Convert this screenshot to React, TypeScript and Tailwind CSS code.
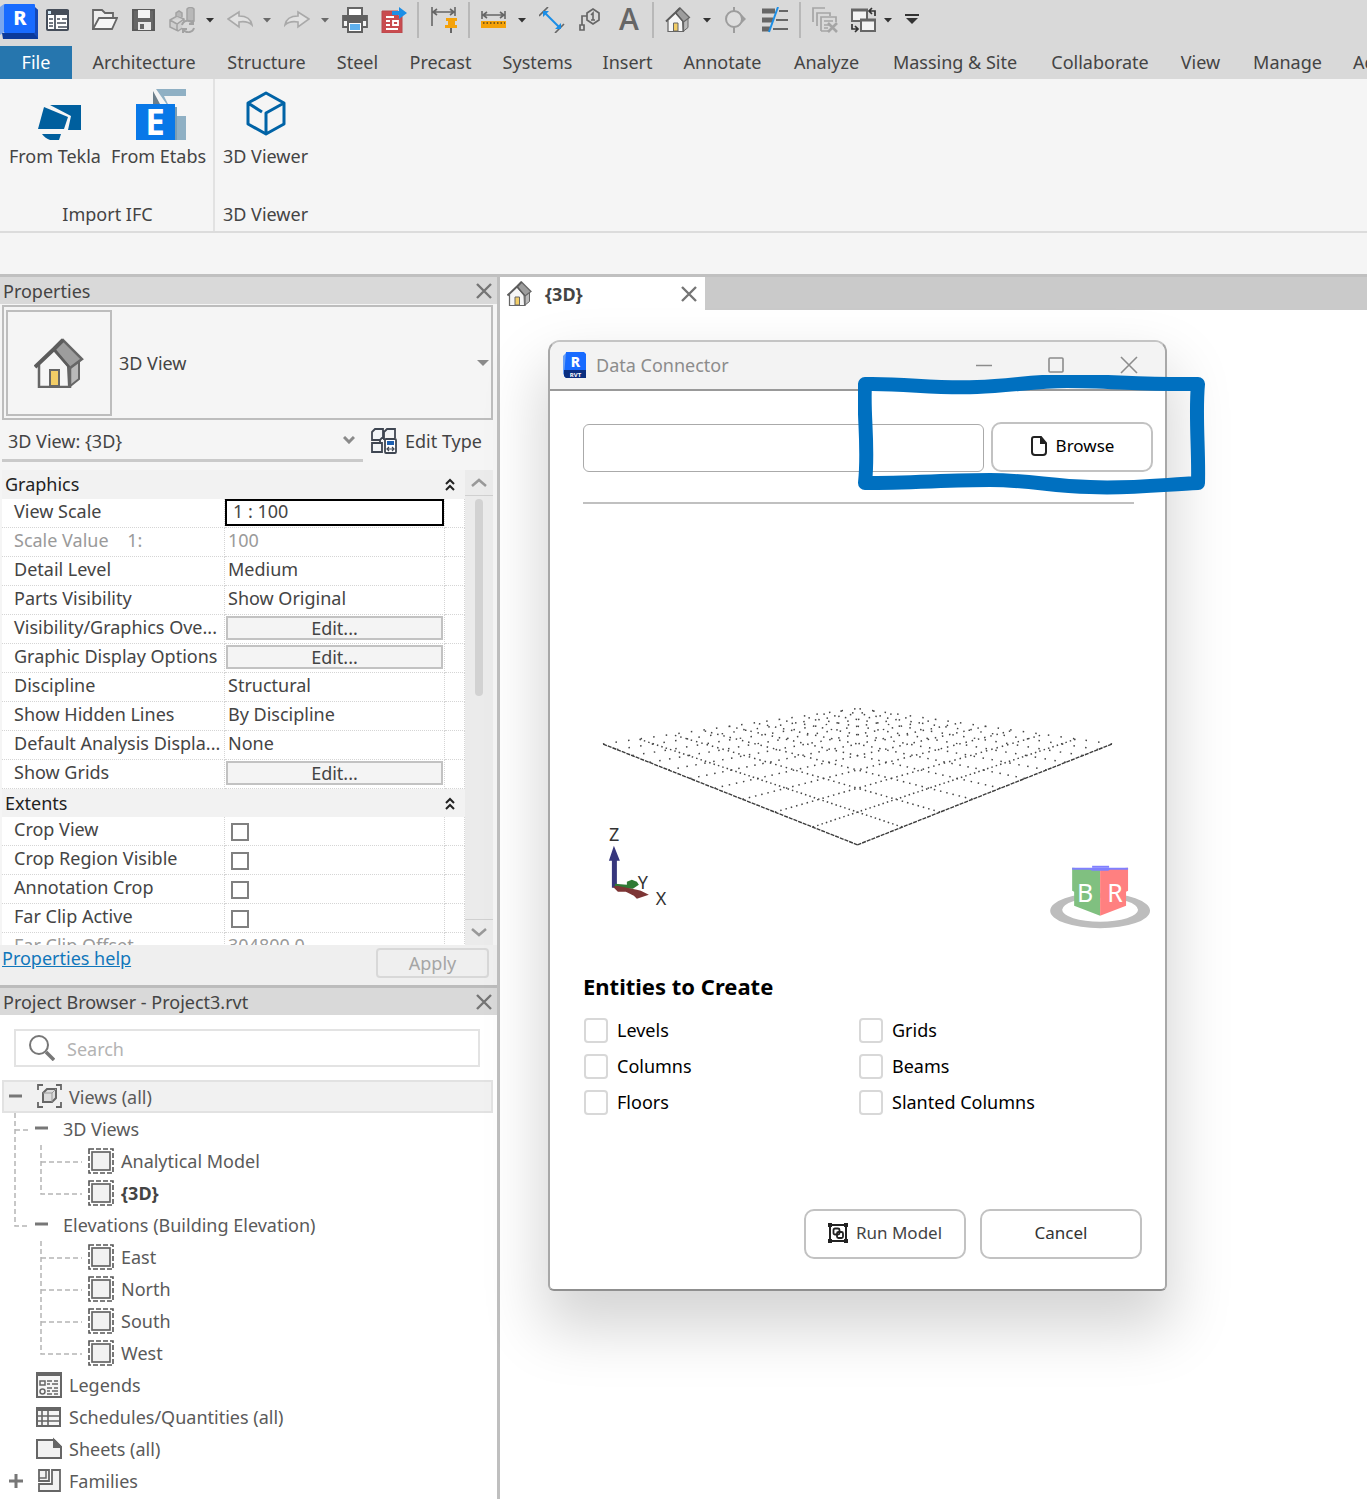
import React from "react";

type IconProps = { className?: string; children?: React.ReactNode; box?: string };

const Icon = ({ className = "h-[26px] w-[26px]", children, box = "0 0 26 26" }: IconProps) => (
  <svg viewBox={box} className={`shrink-0 ${className}`} fill="none" stroke="#666" strokeWidth="2" aria-hidden="true">
    {children}
  </svg>
);

const House = ({ className }: { className?: string }) => (
  <Icon className={className} box="0 0 50 50">
    <path d="M5 26 20 11 34 28v20H5z" fill="#f6f6f6" stroke="none" />
    <path d="M34 29 45 20v21l-10 8z" fill="#b9b9b9" stroke="#666" />
    <path d="M20 12 29 2l19 19-12 9z" fill="#9d9d9d" stroke="#666" strokeWidth="2.5" />
    <path d="M5 27v22h31V29" stroke="#666" strokeWidth="2.5" />
    <path d="M1 29 20 11 29 2" stroke="#5c5c5c" strokeWidth="4" />
    <path d="M20 11l15 18" stroke="#5c5c5c" strokeWidth="2.5" />
    <path d="M16 48V32h9v16z" fill="#f2cd66" stroke="#666" />
  </Icon>
);

const Close = ({ className = "h-4 w-4" }: { className?: string }) => (
  <Icon className={className} box="0 0 16 16">
    <path d="M1 1l14 14M15 1L1 15" stroke="#757575" strokeWidth="2.4" />
  </Icon>
);

const Caret = ({ color = "#333" }: { color?: string }) => (
  <Icon className="h-[6px] w-[10px]" box="0 0 10 6">
    <path d="M1 1h8L5 5.500z" fill={color} stroke="none" />
  </Icon>
);

const RevitLogo = () => (
  <Icon className="h-[36px] w-[38px]" box="0 0 38 36">
    <path d="M0 4 4 1v28l-4 3z" fill="#79a6ee" stroke="none" />
    <path d="M2 30h32V4l4 3v29H3z" fill="#0b3a9b" stroke="none" />
    <path d="M34 3l4 4v28l-4-4z" fill="#1548b5" stroke="none" />
    <rect x="4" y="1" width="31" height="29" rx="1" fill="#186bff" stroke="none" />
    <text x="20" y="22" textAnchor="middle" fontFamily="Noto Sans" fontWeight="800" fontSize="20" fill="#fff" stroke="none">R</text>
  </Icon>
);

const tools: { label: string; gap: string; kind?: "caret" | "sep"; color?: string; icon?: React.ReactNode }[] = [
  {
    label: "Home", gap: "ml-[7px]",
    icon: (
      <Icon>
        <rect x="2" y="3" width="21" height="20" rx="1" fill="#fff" stroke="#454d59" />
        <path d="M1 3h23v5H1z" fill="#454d59" stroke="none" />
        <path d="M3 4h3v3H3z" fill="#cfe6f5" stroke="none" />
        <path d="M10 8v15M4 12h4M4 16h4M4 19h4M12 12h3M17 12h5M12 16h9M13 20h9" stroke="#454d59" strokeWidth="1.700" />
      </Icon>
    ),
  },
  {
    label: "Open", gap: "ml-[21px]",
    icon: (
      <Icon>
        <path d="M1 22V3h9l3 3h8v5" fill="#eee" strokeWidth="1.800" />
        <path d="M1 22 7 11h18l-5 11z" fill="#f6f6f6" strokeWidth="1.800" />
      </Icon>
    ),
  },
  {
    label: "Save", gap: "ml-[13px]",
    icon: (
      <Icon>
        <path d="M2 3h21v20H2z" fill="#666" stroke="#5a5a5a" />
        <path d="M7 3h12v8H7z" fill="#f4f4f4" stroke="none" />
        <path d="M7 15h13v8H7z" fill="#e8e8e8" stroke="none" />
        <path d="M9 17h4v5H9z" fill="#666" stroke="none" />
      </Icon>
    ),
  },
  {
    label: "Synchronize", gap: "ml-[12px]",
    icon: (
      <Icon>
        <g stroke="#a2a2a2" strokeWidth="1.5">
          <path d="M1 13l7-4 7 3v8l-6 4-8-4zM1 13l7 4 7-5M8 17v6" fill="#cfcfcf" />
          <path d="M18 2c2-2 5-2 7 0v12h-7zM7 9V6l3-2 3 2v4" fill="#b8b8b8" />
          <circle cx="19" cy="20" r="6" fill="#d9d9d9" stroke="none" />
          <path d="M13 18a6 6 0 0 1 11-1M25 21a6 6 0 0 1-11 1M24 13v4h-4M14 26v-4h4" strokeWidth="2" />
        </g>
      </Icon>
    ),
  },
  { label: "Synchronize options", gap: "ml-2.5", kind: "caret" },
  {
    label: "Undo", gap: "ml-3",
    icon: <Icon><path d="M1 12 12 5v4c7 0 12 3 13 9-3-3-7-4-13-3v5z" stroke="#a9a9a9" fill="#e2e2e2" strokeWidth="1.6" /></Icon>,
  },
  { label: "Undo list", gap: "ml-[9px]", kind: "caret", color: "#6a6a6a" },
  {
    label: "Redo", gap: "ml-3",
    icon: <Icon><path d="M25 12 14 5v4C7 9 2 12 1 18c3-3 7-4 13-3v5z" stroke="#a9a9a9" fill="#e2e2e2" strokeWidth="1.6" /></Icon>,
  },
  { label: "Redo list", gap: "ml-2.5", kind: "caret", color: "#6a6a6a" },
  {
    label: "Print", gap: "ml-3",
    icon: (
      <Icon>
        <path d="M6 9V1h14v8" fill="#fff" />
        <path d="M1 9h24v11H1z" fill="#f4f4f4" stroke="#606060" strokeWidth="1.800" />
        <path d="M1 9h24v5H1z" fill="#606060" stroke="none" />
        <path d="M6 15h14v10H6z" fill="#fff" stroke="#606060" />
        <path d="M8 17h10v6H8z" fill="#5fb1ee" stroke="none" />
      </Icon>
    ),
  },
  {
    label: "Export PDF", gap: "ml-[13px]",
    icon: (
      <Icon>
        <path d="M1 4h16v5h4v17H1z" fill="#c94b4f" stroke="#b8484c" strokeWidth="1" />
        <path d="M5 10h8M5 14h4M5 18h4M5 22h12M12 14h5v4h-5z" stroke="#fff" strokeWidth="1.800" />
        <path d="M11 4h7V0l8 6-8 6V8h-7z" fill="#1b8ee6" stroke="none" />
      </Icon>
    ),
  },
  { label: "s1", gap: "ml-2.5", kind: "sep" },
  {
    label: "Align", gap: "ml-[12px]",
    icon: (
      <Icon>
        <path d="M1 0v19M24 0v9M2 5h21M6 2 2 5l4 3M19 2l4 3-4 3" strokeWidth="1.6" />
        <path d="M15 11h11v3h-2v4h3v3H14v-3h3v-4h-2z" fill="#f5a209" stroke="none" />
        <path d="M20 21v5" />
      </Icon>
    ),
  },
  { label: "s2", gap: "ml-[11px]", kind: "sep" },
  {
    label: "Measure", gap: "ml-[11px]",
    icon: (
      <Icon>
        <path d="M1 4v8M24 4v8M2 8h21M6 5 2 8l4 3M19 5l4 3-4 3" strokeWidth="1.6" />
        <path d="M0 14h25v7H0z" fill="#f5a209" stroke="none" />
        <path d="M2 16h22" stroke="#7c5a14" strokeDasharray="1.5 2" />
      </Icon>
    ),
  },
  { label: "Measure options", gap: "ml-2.5", kind: "caret" },
  {
    label: "Aligned dimension", gap: "ml-3",
    icon: (
      <Icon>
        <path d="M0 9 9 0M16 26l9-9" strokeWidth="1.600" />
        <path d="M5 5l16 16" stroke="#1b8ee6" />
        <path d="M4 4h6l-6 6zM22 22h-6l6-6z" fill="#1b8ee6" stroke="none" />
      </Icon>
    ),
  },
  {
    label: "Tag by category", gap: "ml-3",
    icon: (
      <Icon>
        <path d="M10 6l6-4 6 4v7l-6 4-6-4zM10 9H5v9" strokeWidth="1.7" />
        <path d="M3 18h4v5H3z" strokeWidth="1.7" />
        <path d="M14 8l2-2v7M14 13h4" strokeWidth="1.6" />
      </Icon>
    ),
  },
  {
    label: "Text", gap: "ml-[13px]",
    icon: <Icon className="h-[26px] w-[26px] overflow-visible"><text x="13" y="23" textAnchor="middle" fontFamily="Open Sans" fontWeight="600" fontSize="30" fill="#666" stroke="none">A</text></Icon>,
  },
  { label: "s3", gap: "ml-2.5", kind: "sep" },
  { label: "Default 3D view", gap: "ml-[11px]", icon: <House className="h-[25px] w-[26px]" /> },
  { label: "3D view options", gap: "ml-[11px]", kind: "caret" },
  {
    label: "Section", gap: "ml-2.5",
    icon: (
      <Icon>
        <path d="M16 4l8 8-8 8z" fill="#9d9d9d" stroke="none" />
        <circle cx="12" cy="12" r="8" fill="#dedede" stroke="#9d9d9d" />
        <path d="M12 0v4M12 20v6" stroke="#9d9d9d" />
      </Icon>
    ),
  },
  {
    label: "Thin lines", gap: "ml-[14px]",
    icon: (
      <Icon>
        <path d="M0 4h13M0 13h11M0 22h8" strokeWidth="5" />
        <path d="M17 4h9M14 13h12M11 22h15" strokeWidth="1.800" />
        <path d="M16 0 7 25" stroke="#1b8ee6" />
      </Icon>
    ),
  },
  { label: "s4", gap: "ml-[11px]", kind: "sep" },
  {
    label: "Close inactive views", gap: "ml-[11px]",
    icon: (
      <Icon>
        <g stroke="#a5a5a5" strokeWidth="1.7">
          <path d="M1 15V1h12M5 19V6h13v3M9 24V10h15v5M9 24h7M12 14h9M12 18h5M12 21h4" />
          <path d="M16 16l9 9M25 16l-9 9" strokeWidth="2.6" />
        </g>
      </Icon>
    ),
  },
  {
    label: "Switch windows", gap: "ml-3",
    icon: (
      <Icon>
        <path d="M2 3h15v11H2z" fill="#f4f4f4" />
        <path d="M11 13h14v11H11z" fill="#f4f4f4" />
        <path d="M1 3h17M10 13h16" strokeWidth="3" />
        <path d="M25 9V4h-5M22 1l-3 3 3 3M2 17v5h5M5 19l3 3-3 3" stroke="#333" strokeWidth="1.700" />
      </Icon>
    ),
  },
  { label: "Switch windows options", gap: "ml-[7px]", kind: "caret" },
  {
    label: "Customize toolbar", gap: "ml-3",
    icon: (
      <Icon className="h-[14px] w-[14px]" box="0 0 14 14">
        <path d="M0 2h14" stroke="#333" />
        <path d="M1 5h12l-6 6z" fill="#333" stroke="none" />
      </Icon>
    ),
  },
];

const tabs: [string, string][] = [
  ["Architecture", "w-[136px]"],
  ["Structure", "w-[109px]"],
  ["Steel", "w-[73px]"],
  ["Precast", "w-[93px]"],
  ["Systems", "w-[101px]"],
  ["Insert", "w-[79px]"],
  ["Annotate", "w-[111px]"],
  ["Analyze", "w-[97px]"],
  ["Massing & Site", "w-[160px]"],
  ["Collaborate", "w-[130px]"],
  ["View", "w-[71px]"],
  ["Manage", "w-[103px]"],
];

const RibbonButton = ({ icon, label }: { icon: React.ReactNode; label: string }) => (
  <button className="flex flex-col items-center">
    <span className="flex h-[56px] items-end">{icon}</span>
    <span className="mt-1 whitespace-nowrap leading-6">{label}</span>
  </button>
);

const TeklaIcon = () => (
  <Icon className="ml-2 h-[50px] w-[44px]" box="0 0 44 50">
    <g fill="#005f9e" stroke="none">
      <path d="M7 17 1 39h26l4-12z" />
      <path d="M13 15h31v25H31l3-14z" />
      <path d="M5 44h19l-2 6h-9c-3-1-6-3-8-6z" />
    </g>
  </Icon>
);

const EtabsIcon = () => (
  <Icon className="ml-1 h-[51px] w-[50px]" box="0 0 50 51">
    <path d="M20 0h30v7H28l5 10 4 10h13v24H34V20z" fill="#8fb0c4" stroke="none" />
    <path d="M17 2l7 13h-7z" fill="#6d7f8b" stroke="none" />
    <path d="M38 18h3v33h-3z" fill="#7a9db3" stroke="none" />
    <rect x="0" y="15" width="39" height="36" fill="#0878e8" stroke="none" />
    <text x="19" y="46" textAnchor="middle" fontFamily="Noto Sans" fontWeight="700" fontSize="35" fill="#fff" stroke="none">E</text>
  </Icon>
);

const CubeIcon = () => (
  <Icon className="mb-[3px] h-[46px] w-[40px]" box="0 0 40 46">
    <path d="M20 2 38 12v21L20 43 2 33V12zM2 12l14 9M38 12 20 22v21" stroke="#0063a6" strokeWidth="3" strokeLinejoin="round" />
  </Icon>
);

const PanelHeader = ({ title }: { title: string }) => (
  <header className="flex h-[27px] items-center justify-between bg-[#d9d9d9] pl-[3px] pr-[5px]">
    <h2>{title}</h2>
    <button aria-label={`Close ${title}`}><Close /></button>
  </header>
);

type Prop = { name: string; value?: string; kind?: "edit" | "check" | "field"; dim?: boolean };
const sections: { title: string; rows: Prop[] }[] = [
  {
    title: "Graphics",
    rows: [
      { name: "View Scale", value: "1 : 100", kind: "field" },
      { name: "Scale Value    1:", value: "100", dim: true },
      { name: "Detail Level", value: "Medium" },
      { name: "Parts Visibility", value: "Show Original" },
      { name: "Visibility/Graphics Ove...", kind: "edit" },
      { name: "Graphic Display Options", kind: "edit" },
      { name: "Discipline", value: "Structural" },
      { name: "Show Hidden Lines", value: "By Discipline" },
      { name: "Default Analysis Displa...", value: "None" },
      { name: "Show Grids", kind: "edit" },
    ],
  },
  {
    title: "Extents",
    rows: [
      { name: "Crop View", kind: "check" },
      { name: "Crop Region Visible", kind: "check" },
      { name: "Annotation Crop", kind: "check" },
      { name: "Far Clip Active", kind: "check" },
      { name: "Far Clip Offset", value: "304800.0", dim: true },
    ],
  },
];

const PropertyValue = ({ row }: { row: Prop }) => {
  if (row.kind === "field")
    return <input aria-label={row.name} defaultValue={row.value} className="block h-[27px] w-full border-2 border-black bg-white px-1.5 pb-1" />;
  if (row.kind === "edit")
    return (
      <button aria-label={`Edit ${row.name}`} className="mx-auto mt-px flex h-6 w-[217px] items-center justify-center border-2 border-[#c2c2c2] bg-[#f4f4f4]">
        Edit...
      </button>
    );
  if (row.kind === "check")
    return <input type="checkbox" aria-label={row.name} className="ml-1.5 mt-1.5 block h-[18px] w-[18px] appearance-none border-2 border-[#808080] bg-white" />;
  return <span className="pl-[3px]">{row.value}</span>;
};

const Properties = () => (
  <section className="bg-[#f5f5f5]">
    <PanelHeader title="Properties" />
    <div className="ml-0.5 mr-1 mt-px flex h-[115px] items-center border-2 border-[#bdbdbd] p-0.5">
      <div className="flex h-[106px] w-[106px] items-center justify-center border-2 border-[#bdbdbd]">
        <House className="h-[50px] w-[50px]" />
      </div>
      <button className="flex flex-1 items-center justify-between pl-[7px] pr-0 text-left">
        3D View
        <Icon className="h-[6px] w-[12px]" box="0 0 12 6"><path d="M0 0h12L6 6z" fill="#8b8b8b" stroke="none" /></Icon>
      </button>
    </div>
    <div className="flex h-[50px] items-start">
      <div className="relative ml-0.5 flex h-[42px] w-[361px] items-center border-b-[3px] border-[#cacaca]">
        <select aria-label="View" className="h-full w-full appearance-none bg-transparent pl-1.5 pt-0.5 text-[#444]">
          <option>3D View: {"{3D}"}</option>
        </select>
        <Icon className="pointer-events-none absolute right-2 h-[8px] w-[12px]" box="0 0 12 8"><path d="M1 1l5 5 5-5" stroke="#8a8a8a" strokeWidth="3" /></Icon>
      </div>
      <button className="ml-2 flex h-[41px] items-center gap-2">
        <Icon className="h-[26px] w-[26px]">
          <g stroke="#3f4652" strokeWidth="1.8">
            <path d="M1 4l3-3h8v8l-3 3H1zM13 4l3-3h8v9M1 15h10v9H1zM13 4v8M9 12v3" fill="#f2f5f8" />
            <rect x="14" y="11" width="11" height="14" rx="1" fill="#fff" />
          </g>
          <path d="M16 13h7v4h-7z" fill="#1d5fb0" stroke="none" />
          <path d="M18 19l-2 2 2 2M21 19l2 2-2 2M17 21h5" stroke="#3f4652" strokeWidth="1.2" />
        </Icon>
        Edit Type
      </button>
    </div>
    <div className="ml-0.5 mr-1 flex h-[475px] overflow-hidden bg-white">
      <table className="w-full flex-1 table-fixed border-separate border-spacing-0">
        <colgroup>
          <col className="w-[223px]" />
          <col />
          <col className="w-5" />
        </colgroup>
        {sections.map((s, si) => (
          <tbody key={s.title}>
            <tr className={si === 0 ? "h-[29px] bg-[#f2f2f2] text-[#222]" : "h-7 bg-[#f2f2f2] text-[#222]"}>
              <th colSpan={2} className="p-0 pl-[3px] text-left align-top font-normal leading-7">{s.title}</th>
              <td className="p-0">
                <button aria-label={`Collapse ${s.title}`} className="block">
                  <Icon className="h-[13px] w-[10px]" box="0 0 10 13"><path d="M1 6l4-4 4 4M1 12l4-4 4 4" stroke="#222" /></Icon>
                </button>
              </td>
            </tr>
            {s.rows.map((r) => (
              <tr key={r.name} className={r.dim ? "h-[29px] text-[#9a9a9a]" : "h-[29px]"}>
                <td className="overflow-hidden whitespace-pre border-b border-r border-dotted border-[#d5d5d5] p-0 pl-3 align-top leading-6">{r.name}</td>
                <td className="border-b border-r border-dotted border-[#d5d5d5] p-0 align-top leading-6"><PropertyValue row={r} /></td>
                <td className="border-b border-r border-dotted border-[#d5d5d5] p-0" />
              </tr>
            ))}
          </tbody>
        ))}
      </table>
      <div className="flex w-7 flex-col items-center bg-[#ebebeb]">
        <button aria-label="Scroll up" className="flex h-[26px] w-full items-center justify-center border-b border-[#d0d0d0]">
          <Icon className="h-[9px] w-[16px]" box="0 0 16 9"><path d="M1 8l7-6 7 6" stroke="#999" strokeWidth="2.5" /></Icon>
        </button>
        <div className="mt-[3px] h-[197px] w-2 rounded-full bg-[#d2d2d2]" />
        <button aria-label="Scroll down" className="mt-auto flex h-[26px] w-full items-center justify-center border-t border-[#d0d0d0]">
          <Icon className="h-[9px] w-[16px]" box="0 0 16 9"><path d="M1 1l7 6 7-6" stroke="#999" strokeWidth="2.5" /></Icon>
        </button>
      </div>
    </div>
    <footer className="flex h-10 items-start justify-between bg-[#efefef] pl-0.5 pr-2">
      <a href="#help" className="leading-[26px] text-[#1177bb] underline">Properties help</a>
      <button disabled className="mt-[3px] h-[30px] w-[113px] rounded border-2 border-[#d8d8d8] text-[#a5a5a5]">Apply</button>
    </footer>
  </section>
);

const dash = { stroke: "#b5b5b5", strokeWidth: 1.5, strokeDasharray: "5 3" };

const Guides = ({ level, trunk, last }: { level: 1 | 2; trunk?: boolean; last?: boolean }) =>
  level === 1 ? (
    <svg className="h-8 w-[35px] shrink-0" viewBox="0 0 35 32" aria-hidden="true">
      <path d={last ? "M15 0V17H30" : "M15 0V32M15 17H30"} fill="none" {...dash} />
    </svg>
  ) : (
    <svg className="h-8 w-[88px] shrink-0" viewBox="0 0 88 32" aria-hidden="true">
      {trunk && <path d="M15 0V32" fill="none" {...dash} />}
      <path d={last ? "M41 0V17H82" : "M41 0V32M41 17H82"} fill="none" {...dash} />
    </svg>
  );

const Toggle = ({ open = true, label }: { open?: boolean; label: string }) => (
  <button aria-label={`Toggle ${label}`} className="shrink-0">
    <Icon className="h-[14px] w-[14px]" box="0 0 14 14">
      <path d={open ? "M0 6h13" : "M0 7h14M7 0v14"} stroke="#777" strokeWidth="3" />
    </Icon>
  </button>
);

const ViewIcon = () => (
  <Icon className="h-[26px] w-[26px]">
    <rect x="1" y="1" width="24" height="24" stroke="#555" strokeWidth="1.6" strokeDasharray="5 2" />
    <rect x="4" y="4" width="18" height="18" fill="#f2f2f2" stroke="#666" strokeWidth="1.700" />
  </Icon>
);

const leafIcons = {
  Legends: (
    <Icon>
      <path d="M1 1h24v24H1z" fill="#f6f6f6" />
      <path d="M0 2h26" strokeWidth="4" />
      <path d="M4 9h5v4H4zM11 9h5M18 9h4M11 12h3M16 12h6M11 16h5M18 16h4M11 19h3M16 19h6M11 22h5M18 22h4" strokeWidth="1.5" />
      <circle cx="6.500" cy="19.500" r="2.500" strokeWidth="1.500" />
    </Icon>
  ),
  "Schedules/Quantities (all)": (
    <Icon>
      <path d="M1 4h23v18H1z" fill="#f6f6f6" />
      <path d="M0 5h25" strokeWidth="4" />
      <path d="M1 12h23M1 17h23M6 6v16M12 6v16" strokeWidth="1.6" />
    </Icon>
  ),
  "Sheets (all)": (
    <Icon>
      <path d="M1 4h17l7 7v11H1z" fill="#f2f2f2" />
      <path d="M18 4v7h7z" fill="#666" />
    </Icon>
  ),
  Families: (
    <Icon>
      <path d="M3 16h13V2h8v21H3z" fill="#f2f2f2" strokeWidth="1.800" />
      <path d="M3 2h10v11H3z" fill="#f2f2f2" strokeWidth="1.800" />
      <path d="M3 10h7V2" strokeWidth="1.500" />
    </Icon>
  ),
};

const groups = [
  { name: "3D Views", items: ["Analytical Model", "{3D}"] },
  { name: "Elevations (Building Elevation)", items: ["East", "North", "South", "West"] },
];

const ProjectBrowser = () => (
  <section className="flex-1 border-t-[3px] border-[#bcbcbc] bg-white">
    <PanelHeader title="Project Browser - Project3.rvt" />
    <label className="ml-[14px] mr-[17px] mt-[14px] flex h-[38px] items-center gap-3 border-2 border-[#e3e3e3] pl-3">
      <Icon className="h-[26px] w-[27px]" box="0 0 27 26">
        <circle cx="11" cy="10" r="9" stroke="#777" strokeWidth="2" />
        <path d="M18 17l8 8" stroke="#777" strokeWidth="3.500" />
      </Icon>
      <input type="search" aria-label="Search" placeholder="Search" className="min-w-0 flex-1 bg-transparent pt-0.5 outline-none placeholder:text-[#b3b3b3]" />
    </label>
    <ul className="mt-[13px] text-[#5a5a5a]">
      <li>
        <div className="ml-0.5 mr-1 flex h-[33px] items-center border-2 border-[#e2e2e2] bg-[#f1f1f1] pl-[5px]">
          <Toggle label="Views" />
          <Icon className="ml-[14px] h-[26px] w-[26px]">
            <path d="M6 1H1v5M19 1h5v5M6 23H1v-5M19 23h5v-5" strokeWidth="1.8" />
            <path d="M6 9l4-4h9v9l-4 4H6z" fill="#dcdcdc" />
            <path d="M6 9h9v9M15 9l4-4" strokeWidth="1" stroke="#999" />
          </Icon>
          <span className="ml-1.5">Views (all)</span>
        </div>
        <ul>
          {groups.map((g, gi) => (
            <li key={g.name}>
              <div className="flex h-8 items-center">
                <Guides level={1} last={gi === 1} />
                <Toggle label={g.name} />
                <span className="ml-[14px]">{g.name}</span>
              </div>
              <ul>
                {g.items.map((it, i) => (
                  <li key={it} className="flex h-8 items-center">
                    <Guides level={2} trunk={gi === 0} last={i === g.items.length - 1} />
                    <ViewIcon />
                    <span className={it === "{3D}" ? "ml-[7px] font-bold text-[#444]" : "ml-[7px]"}>{it}</span>
                  </li>
                ))}
              </ul>
            </li>
          ))}
        </ul>
      </li>
      {Object.entries(leafIcons).map(([name, icon]) => (
        <li key={name} className="flex h-8 items-center pl-[9px]">
          {name === "Families" ? <Toggle open={false} label={name} /> : <span className="w-[14px]" />}
          <span className="ml-[13px]">{icon}</span>
          <span className="ml-[7px]">{name}</span>
        </li>
      ))}
    </ul>
  </section>
);

/* Perspective projection of the unit ground plane; (0,0) is the nearest corner. */
const project = (u: number, v: number): string => {
  const g = 0.92;
  const w = 1 + g * (u + v);
  const x = (858 + (603 * (1 + g) - 858) * u + (1113 * (1 + g) - 858) * v) / w;
  const y = (845 + (744 * (1 + g) - 845) * (u + v)) / w;
  return `${x.toFixed(1)} ${y.toFixed(1)}`;
};

const Viewport = () => (
  <svg className="block h-[460px] w-full" viewBox="550 504 616 460" role="img" aria-label="3D preview">
    <g fill="none">
      {Array.from({ length: 11 }, (_, i) => {
        const t = i / 10;
        const edge = i === 0;
        return (
          <g
            key={i}
            stroke={edge ? "#3c3c3c" : "#444"}
            strokeWidth={edge ? 1.4 : 1.5}
            strokeDasharray={edge ? "4 1" : `1.5 ${2.2 + i * 0.9}`}
          >
            <path d={`M${project(t, 0)}L${project(t, 1)}`} />
            <path d={`M${project(0, t)}L${project(1, t)}`} />
          </g>
        );
      })}
    </g>
    <g stroke="none">
      <path d="M612 888v-27h-3l5-15 6 15h-3v27z" fill="#37377d" />
      <path d="M615 884l12 1v-3l5-2 5 2 2 3-6 4h-6l-12-1z" fill="#2f7a35" />
      <path d="M613 887l4-1 20 4 4 1 8 4-12 4-3-3-8-4h-8z" fill="#7d3535" />
    </g>
    <g fontFamily="Noto Sans" fontSize="18" fill="#333">
      <text x="609" y="841">Z</text>
      <text x="638" y="889">Y</text>
      <text x="656" y="905">X</text>
    </g>
    <path
      d="M1051 911a50 17.500 0 0 1 100 0a50 17.500 0 0 1-100 0zM1063 910a38 12 0 0 0 76 0a38 12 0 0 0-76 0z"
      fill="#bdbdbd"
      fillRule="evenodd"
    />
    <path d="M1073 868l28 2v46l-26-10v-14l-2-1z" fill="#80c080" />
    <path d="M1101 870l28-2v23l-2 1v14l-26 10z" fill="#ff8080" />
    <path d="M1073 868h56v2h-18l-2 1h-16l-2-1h-18z" fill="#8080ff" />
    <path d="M1093 867h17" stroke="#8080ff" strokeWidth="2" />
    <g fontFamily="Noto Sans" fontSize="25" fill="#fff" textAnchor="middle">
      <text x="1086" y="902">B</text>
      <text x="1116" y="902">R</text>
    </g>
  </svg>
);

const entities = ["Levels", "Grids", "Columns", "Beams", "Floors", "Slanted Columns"];

const DataConnector = () => (
  <section
    aria-label="Data Connector"
    className="relative ml-12 mt-[30px] w-[619px] rounded-t-xl rounded-b-md border-2 border-t-[#c4c4c4] border-x-[#a8a8a8] border-b-[#8f8f8f] bg-white text-black shadow-[0_32px_60px_6px_rgba(0,0,0,0.17)]"
  >
    <header className="flex h-[49px] items-center rounded-t-[10px] border-b-2 border-[#999] bg-[#f3f3f3] pb-0.5 pl-[13px] pr-[27px] text-[#8c8c8c]">
      <Icon className="h-[26px] w-[23px]" box="0 0 23 26">
        <path d="M0 4l3-3v19l-3 3z" fill="#6ba0f5" stroke="none" />
        <path d="M3 0h18l2 2v24H3l-2-2z" fill="#186bff" stroke="none" />
        <path d="M1 18h22v8H3l-2-2z" fill="#0b2f80" stroke="none" />
        <text x="12.500" y="15" textAnchor="middle" fontFamily="Noto Sans" fontWeight="800" fontSize="14" fill="#fff" stroke="none">R</text>
        <text x="12.500" y="24.500" textAnchor="middle" fontFamily="Noto Sans" fontWeight="700" fontSize="6" fill="#fff" stroke="none">RVT</text>
      </Icon>
      <h1 className="ml-2.5 flex-1">Data Connector</h1>
      <button aria-label="Minimize">
        <Icon className="h-4 w-4" box="0 0 16 16"><path d="M0 8.500h16" stroke="#8c8c8c" strokeWidth="1.500" /></Icon>
      </button>
      <button aria-label="Maximize" className="ml-14">
        <Icon className="h-4 w-4" box="0 0 16 16"><rect x="1" y="1" width="14" height="14" rx="1" stroke="#8c8c8c" strokeWidth="1.600" /></Icon>
      </button>
      <button aria-label="Close" className="ml-14">
        <Icon className="h-[18px] w-[18px]" box="0 0 18 18"><path d="M1 1l16 16M17 1L1 17" stroke="#8c8c8c" strokeWidth="1.600" /></Icon>
      </button>
    </header>
    <div className="pb-[30px] pt-[31px]">
      <div className="flex items-end gap-[7px] pl-[33px] pr-3">
        <input aria-label="File path" className="h-12 min-w-0 flex-1 rounded-md border border-[#aaa] px-3" />
        <button className="flex h-[50px] w-[162px] items-center justify-center gap-2 rounded-[10px] border-2 border-[#c2c2c2] bg-white pb-0.5 text-[17px]">
          <Icon className="h-[22px] w-[18px]" box="0 0 18 22">
            <path d="M4 2h7l5 6v9a3 3 0 0 1-3 3H5a3 3 0 0 1-3-3V4a2 2 0 0 1 2-2z" stroke="#222" />
            <path d="M10 2v7h7z" fill="#222" stroke="none" />
          </Icon>
          Browse
        </button>
      </div>
      <hr className="ml-[33px] mr-[31px] mt-[30px] border-t-2 border-[#c0c0c0]" />
      <Viewport />
      <div role="group" aria-labelledby="entities-title" className="pl-[33px] pt-2">
        <h2 id="entities-title" className="text-[22px] font-bold leading-7">Entities to Create</h2>
        <div className="ml-px mt-3 grid grid-cols-[275px_1fr]">
          {entities.map((e) => (
            <label key={e} className="flex h-9 items-center gap-[9px]">
              <input type="checkbox" className="h-[25px] w-6 appearance-none rounded border-2 border-[#d8d8d8] bg-white" />
              {e}
            </label>
          ))}
        </div>
      </div>
      <div className="mt-[89px] flex justify-end gap-[14px] pr-[23px]">
        <button className="flex h-[50px] w-[162px] items-center justify-center gap-2 rounded-[10px] border-2 border-[#c2c2c2] pb-0.5 text-[17px] text-[#444]">
          <Icon className="h-5 w-5" box="0 0 20 20">
            <rect x="2" y="2" width="16" height="16" stroke="#222" />
            <path d="M0 0h4v4H0zM16 0h4v4h-4zM0 16h4v4H0zM16 16h4v4h-4z" fill="#222" stroke="none" />
            <rect x="5.500" y="5.500" width="6" height="6" rx="1.500" stroke="#222" strokeWidth="1.800" />
            <rect x="9" y="9" width="6" height="6" rx="1.500" stroke="#222" strokeWidth="1.800" />
          </Icon>
          Run Model
        </button>
        <button className="h-[50px] w-[162px] rounded-[10px] border-2 border-[#c2c2c2] pb-0.5 text-[17px] text-[#333]">Cancel</button>
      </div>
    </div>
    <svg className="pointer-events-none absolute left-[308px] top-[33px] h-[120px] w-[350px]" viewBox="858 375 350 120" fill="none" aria-hidden="true">
      <path
        d="M865 384C905 383 935 389 977 387C1010 386 1035 381 1067 381C1110 381 1145 385 1198 384C1195 415 1199 450 1198 483C1160 485 1125 489 1090 487C1050 486 1030 480 990 480C950 480 910 483 865 483C869 445 863 415 865 384Z"
        stroke="#0070c0"
        strokeWidth="14"
        strokeLinejoin="round"
      />
    </svg>
  </section>
);

export default function App() {
  return (
    <div className="flex min-h-screen flex-col overflow-hidden bg-white font-['Noto_Sans',sans-serif] text-[18px] leading-6 text-[#444]">
      <div className="bg-[#d9d9d9]">
        <div className="flex h-[46px] items-start pt-[3px]">
          <button aria-label="Revit"><RevitLogo /></button>
          {tools.map((t) =>
            t.kind === "sep" ? (
              <span key={t.label} className={`${t.gap} -mt-px h-9 w-0.5 shrink-0 bg-[#b8b8b8]`} />
            ) : (
              <button key={t.label} aria-label={t.label} className={`${t.gap} flex h-[33px] shrink-0 items-center`}>
                {t.kind === "caret" ? <Caret color={t.color} /> : t.icon}
              </button>
            ),
          )}
        </div>
        <nav className="flex h-[33px] items-stretch whitespace-nowrap">
          <button className="mr-1 w-[72px] shrink-0 bg-[#2676ae] pb-0.5 text-white">File</button>
          {tabs.map(([name, w]) => (
            <button key={name} className={`${w} shrink-0 pb-0.5`}>{name}</button>
          ))}
          <button className="ml-3.5 shrink-0 pb-0.5">Add-Ins</button>
        </nav>
      </div>
      <div className="flex h-[154px] border-b-2 border-[#dcdcdc] bg-[#f5f5f5]">
        <div className="flex w-[215px] flex-col items-center border-r-2 border-[#e2e2e2] pl-0.5">
          <div className="mt-[5px] flex gap-2.5">
            <RibbonButton icon={<TeklaIcon />} label="From Tekla" />
            <RibbonButton icon={<EtabsIcon />} label="From Etabs" />
          </div>
          <span className="mt-[34px]">Import IFC</span>
        </div>
        <div className="ml-2 flex flex-col items-center">
          <div className="mt-[5px]"><RibbonButton icon={<CubeIcon />} label="3D Viewer" /></div>
          <span className="mt-[34px]">3D Viewer</span>
        </div>
      </div>
      <div className="h-[44px] border-b-[3px] border-[#c0c0c0] bg-[#f5f5f5]" />
      <div className="flex flex-1">
        <aside className="flex w-[500px] shrink-0 flex-col border-r-[3px] border-[#bfbfbf] bg-[#f0f0f0]">
          <Properties />
          <ProjectBrowser />
        </aside>
        <main className="min-w-0 flex-1 bg-white">
          <div className="flex h-[33px] bg-[#cacaca]">
            <div className="flex w-[205px] items-center bg-white pl-[7px] pr-2">
              <House className="h-[25px] w-[25px]" />
              <span className="ml-[13px] flex-1 font-bold">{"{3D}"}</span>
              <button aria-label="Close {3D}"><Close /></button>
            </div>
          </div>
          <DataConnector />
        </main>
      </div>
    </div>
  );
}
